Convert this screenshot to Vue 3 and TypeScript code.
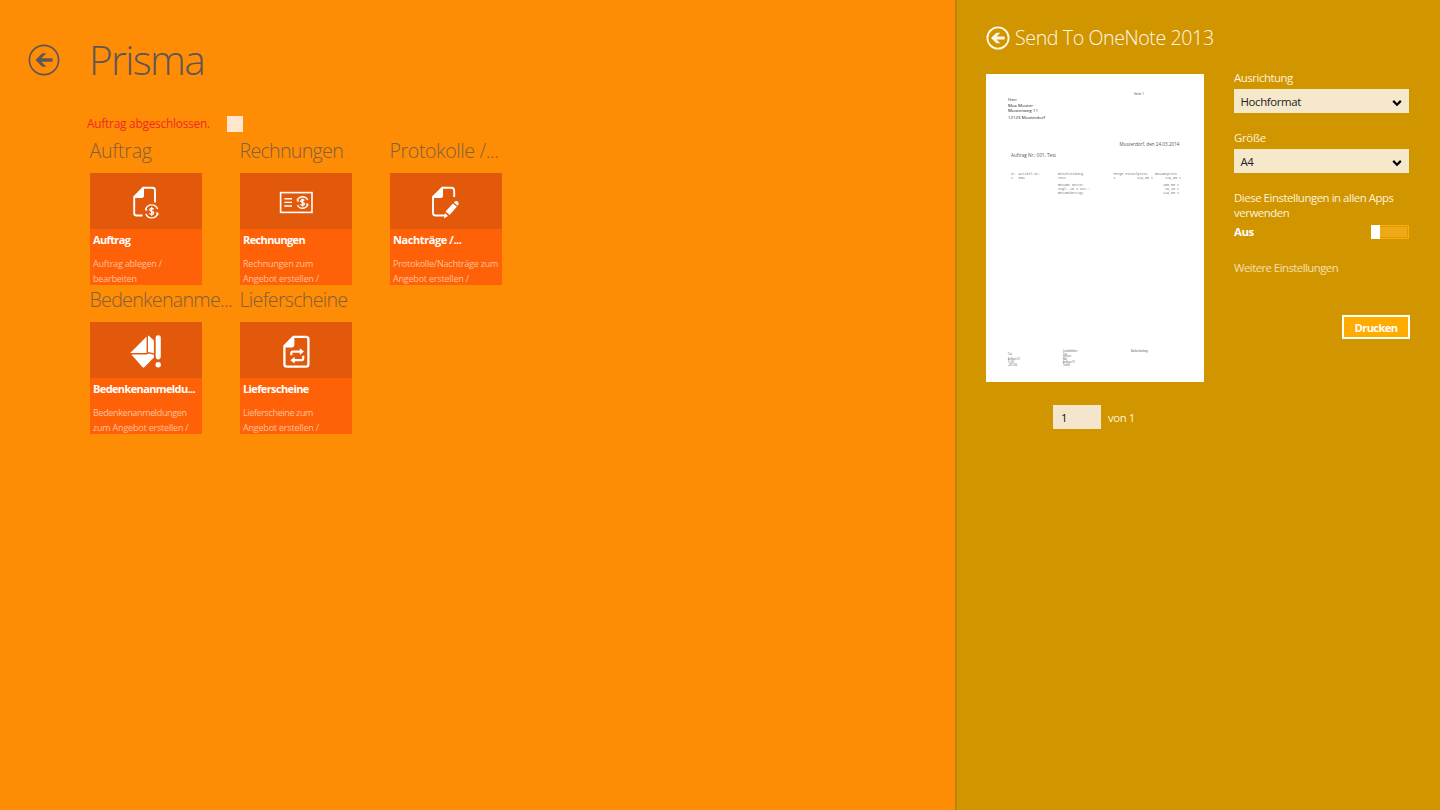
<script setup lang="ts">
import { ref } from "vue";

type IconName = "order" | "invoice" | "protocol" | "concern" | "delivery";

interface Tile {
  icon: IconName;
  group: string;
  title: string;
  lines: string[];
}

interface DocText {
  x: number;
  y: number;
  w: number;
  text: string;
  kind: "sans" | "date" | "mono" | "head" | "foot";
}

const tiles: Tile[] = [
  {
    icon: "order",
    group: "Auftrag",
    title: "Auftrag",
    lines: ["Auftrag ablegen /", "bearbeiten"],
  },
  {
    icon: "invoice",
    group: "Rechnungen",
    title: "Rechnungen",
    lines: ["Rechnungen zum", "Angebot erstellen /"],
  },
  {
    icon: "protocol",
    group: "Protokolle /...",
    title: "Nachträge /...",
    lines: ["Protokolle/Nachträge zum", "Angebot erstellen /"],
  },
  {
    icon: "concern",
    group: "Bedenkenanme...",
    title: "Bedenkenanmeldu...",
    lines: ["Bedenkenanmeldungen", "zum Angebot erstellen /"],
  },
  {
    icon: "delivery",
    group: "Lieferscheine",
    title: "Lieferscheine",
    lines: ["Lieferscheine zum", "Angebot erstellen /"],
  },
];

// printed page, in preview units
const docTexts: DocText[] = [
  { x: 148, y: 21, w: 10, text: "Seite 1", kind: "head" },
  { x: 22, y: 27.4, w: 9, text: "Herr", kind: "sans" },
  { x: 22, y: 32.8, w: 25, text: "Max  Muster", kind: "sans" },
  { x: 22, y: 38.4, w: 30, text: "Musterweg  11", kind: "sans" },
  { x: 22, y: 45.2, w: 37, text: "12123  Musterdorf", kind: "sans" },
  { x: 133.5, y: 71.8, w: 60, text: "Musterdorf, den 24.03.2014", kind: "date" },
  { x: 25, y: 82.8, w: 45, text: "Auftrag Nr.: 001, Test", kind: "date" },
  { x: 25, y: 101, w: 5, text: "Nr.", kind: "mono" },
  { x: 32.5, y: 101, w: 22, text: "Artikel-Nr.", kind: "mono" },
  { x: 72, y: 101, w: 25, text: "Beschreibung", kind: "mono" },
  { x: 127.5, y: 101, w: 34, text: "Menge Einzelpreis", kind: "mono" },
  { x: 169, y: 101, w: 22, text: "Gesamtpreis", kind: "mono" },
  { x: 25, y: 105, w: 2, text: "1", kind: "mono" },
  { x: 32.5, y: 105, w: 6.5, text: "001", kind: "mono" },
  { x: 72, y: 105, w: 8, text: "Test", kind: "mono" },
  { x: 127.5, y: 105, w: 2, text: "1", kind: "mono" },
  { x: 151, y: 105, w: 16, text: "119,60 €", kind: "mono" },
  { x: 179, y: 105, w: 16, text: "119,60 €", kind: "mono" },
  { x: 72, y: 112.4, w: 26, text: "Gesamt Netto:", kind: "mono" },
  { x: 177, y: 112.4, w: 16, text: "100,50 €", kind: "mono" },
  { x: 72, y: 116, w: 32, text: "zzgl. 19 % USt.:", kind: "mono" },
  { x: 179, y: 116, w: 14, text: "19,10 €", kind: "mono" },
  { x: 72, y: 119.6, w: 26, text: "Gesamtbetrag:", kind: "mono" },
  { x: 177, y: 119.6, w: 16, text: "119,60 €", kind: "mono" },
  { x: 22, y: 280.6, w: 4, text: "Test", kind: "foot" },
  { x: 22, y: 286, w: 12, text: "Am Bogen 101", kind: "foot" },
  { x: 22, y: 288.8, w: 6, text: "Tel. Nr.", kind: "foot" },
  { x: 22, y: 291.6, w: 9, text: "+49 1234", kind: "foot" },
  { x: 77, y: 278, w: 15, text: "Geschäftsführer:", kind: "foot" },
  { x: 77, y: 280.6, w: 4, text: "Test", kind: "foot" },
  { x: 77, y: 283.3, w: 8, text: "Internet", kind: "foot" },
  { x: 77, y: 286, w: 4, text: "Mail", kind: "foot" },
  { x: 77, y: 288.8, w: 12, text: "Am Bogen 101", kind: "foot" },
  { x: 77, y: 291.6, w: 7, text: "Telefon", kind: "foot" },
  { x: 145, y: 278, w: 17, text: "Bankverbindung:", kind: "foot" },
];

const done = ref(false);
const page = ref("1");
const orientation = ref("Hochformat");
const size = ref("A4");
</script>

<template>
  <div class="screen">
    <main class="hub">
      <header class="hub-header">
        <svg class="hub-back" viewBox="0 0 32 32" aria-hidden="true">
          <circle cx="16" cy="16" r="14.6" />
          <path d="M7.5 16 14.3 9.2H18.4L13.4 14.3H24.6V17.7H13.4L18.4 22.8H14.3Z" />
        </svg>
        <h1>Prisma</h1>
      </header>

      <div class="status">
        <span class="status-text">Auftrag abgeschlossen.</span>
        <span class="checkbox" @click="done = !done"></span>
      </div>

      <div class="groups">
        <section v-for="tile in tiles" :key="tile.icon" class="group" :class="tile.icon">
          <h2>{{ tile.group }}</h2>
          <div class="tile">
            <div class="tile-top">
              <svg class="tile-icon" viewBox="0 0 36 36" aria-hidden="true">
                <g v-if="tile.icon === 'order'">
                  <path class="line" d="M14.5 31.5H8.5Q6.2 31.5 6.2 29.2V13L15.2 3.7H24.5Q27 3.7 27 6.2V18.5" />
                  <path class="fill" d="M6 14 16 3.4V11.5Q16 14 13.5 14Z" />
                  <path class="thin" d="M17.8 25A6.3 6.3 0 0 1 29.6 25M29.6 29.8A6.3 6.3 0 0 1 17.8 29.8" />
                  <path class="fill" d="M17 23.4V26.4H20ZM30.4 31.4V28.4H27.4Z" />
                  <path class="dollar" d="M25.7 25.2Q25 24.4 23.7 24.4Q21.8 24.4 21.8 25.7Q21.8 26.9 23.7 27.3Q25.7 27.7 25.7 28.9Q25.7 30.3 23.7 30.3Q22.1 30.3 21.4 29.4M23.7 23V31.7" />
                </g>
                <g v-else-if="tile.icon === 'invoice'">
                  <rect class="frame" x="2.6" y="8.6" width="31.4" height="19.8" />
                  <path class="thin" d="M6.4 14.8H14M6.4 18.4H14M6.4 22H14" />
                  <path class="thin" d="M19.4 16A5.7 5.7 0 0 1 29.7 16M29.7 21A5.7 5.7 0 0 1 19.4 21" />
                  <path class="fill" d="M18.8 14.6V17.4H21.6ZM30.3 22.4V19.6H27.5Z" />
                  <path class="dollar" d="M26.4 16.5Q25.7 15.7 24.5 15.7Q22.7 15.7 22.7 17Q22.7 18.1 24.5 18.5Q26.4 18.9 26.4 20Q26.4 21.3 24.5 21.3Q23.1 21.3 22.4 20.4M24.6 14.4V22.6" />
                </g>
                <g v-else-if="tile.icon === 'protocol'">
                  <path class="line" d="M16.5 31.5H7.5Q5 31.5 5 29V13L14.3 3.7H23.2Q26.2 3.7 26.2 6.7V13" />
                  <path class="fill" d="M4.6 14 15 3.4V11.5Q15 14 12.5 14Z" />
                  <path class="fill" d="M24.9 19.4 28.9 22.8 21.6 31 17.6 27.6ZM25.8 18.4 26.8 17.4Q28.4 16.4 30 17.8Q31.4 19.4 30.2 21L29.6 21.8ZM16.8 29.1 20 31.9 16 34.4Z" />
                </g>
                <g v-else-if="tile.icon === 'concern'">
                  <path class="fill" d="M18.6 3.4V20H2.2ZM20 2.6Q20.7 2.5 21.4 3.2L25.9 7.6V20.2L20 19Z" />
                  <path class="fill" d="M3.4 21.6H18.8L20.4 20.6 25.9 21.8V24.4L16.6 34Q15.4 35 14.3 34Z" />
                  <path class="fill" d="M27.7 4.6Q27.7 2.2 30.2 2.2Q32.8 2.2 32.8 4.6V23Q32.8 26.4 30.2 26.4Q27.7 26.4 27.7 23Z" />
                  <circle class="fill" cx="30.2" cy="31.7" r="2.7" />
                </g>
                <g v-else>
                  <path class="line heavy" d="M6.4 13 15.4 3.8H28Q30.4 3.8 30.4 6.2V31.2Q30.4 33.6 28 33.6H8.8Q6.4 33.6 6.4 31.2Z" />
                  <path class="fill" d="M6 14.4 16.4 3.4V12Q16.4 14.4 14 14.4Z" />
                  <path class="thick" d="M13.3 22.2V20Q13.3 18.6 14.7 18.6H22.6M25.2 22.8V25Q25.2 27.2 23.7 27.2H15.8" />
                  <path class="fill" d="M21.8 15.2 26 18.6 21.8 22ZM16.6 23.8 12.4 27.2 16.6 30.6Z" />
                </g>
              </svg>
            </div>
            <div class="tile-body">
              <h3>{{ tile.title }}</h3>
              <p v-for="line in tile.lines" :key="line">{{ line }}</p>
            </div>
          </div>
        </section>
      </div>
    </main>

    <aside class="print">
      <header class="print-header">
        <svg class="print-back" viewBox="0 0 24 24" aria-hidden="true">
          <circle cx="12" cy="12" r="10.6" />
          <path d="M5 12 10.4 6.7H14.2L10.6 10.4H18.6V13.6H10.6L14.2 17.3H10.4Z" />
        </svg>
        <h2>Send To OneNote 2013</h2>
      </header>

      <div class="print-content">
        <div class="preview">
          <svg class="paper" viewBox="0 0 218 308" aria-hidden="true">
            <text
              v-for="(t, i) in docTexts"
              :key="i"
              :x="t.x"
              :y="t.y"
              :textLength="t.w"
              lengthAdjust="spacingAndGlyphs"
              :class="t.kind"
            >{{ t.text }}</text>
          </svg>
          <div class="pager">
            <input v-model="page" class="page-input" />
            <span>von 1</span>
          </div>
        </div>

        <div class="options">
          <label>Ausrichtung</label>
          <div class="select">
            <span>{{ orientation }}</span>
            <svg viewBox="0 0 10 8" aria-hidden="true"><path d="M1.2 1.9 5 5.7 8.8 1.9" /></svg>
          </div>
          <label class="l-size">Größe</label>
          <div class="select">
            <span>{{ size }}</span>
            <svg viewBox="0 0 10 8" aria-hidden="true"><path d="M1.2 1.9 5 5.7 8.8 1.9" /></svg>
          </div>
          <p class="all-apps">Diese Einstellungen in allen Apps<br />verwenden</p>
          <div class="toggle-row">
            <strong>Aus</strong>
            <span class="toggle"><span class="knob"></span></span>
          </div>
          <a class="more">Weitere Einstellungen</a>
          <button class="print-button">Drucken</button>
        </div>
      </div>
    </aside>
  </div>
</template>

<style>
body {
  margin: 0;
  overflow: hidden;
}
</style>

<style scoped>
.screen {
  display: flex;
  width: 1440px;
  height: 810px;
  background: #ff8c05;
  font-family: "Open Sans", "Noto Sans", sans-serif;
  font-size: 11.4px;
  letter-spacing: -0.45px;
}
h1,
h2,
h3,
p {
  margin: 0;
  font-weight: 300;
  white-space: nowrap;
}
.hub {
  width: 955px;
  flex: none;
}
.hub-header {
  display: flex;
  align-items: center;
  height: 60px;
  padding: 30px 0 0 28px;
  color: #5f5658;
}
.hub-back {
  width: 32px;
  height: 32px;
  margin-right: 29px;
}
.hub-back circle {
  fill: none;
  stroke: #5f5658;
  stroke-width: 1.6;
}
.hub-back path {
  fill: #5f5658;
}
.hub-header h1 {
  font-size: 40.5px;
  line-height: 60px;
  letter-spacing: -1.6px;
}
.status {
  display: flex;
  align-items: center;
  height: 16px;
  margin: 26px 0 0 87px;
}
.status-text {
  width: 140px;
  color: #ee2a24;
  font-size: 11.8px;
  letter-spacing: -0.2px;
  line-height: 16px;
  margin-top: -3px;
}
.checkbox {
  width: 16px;
  height: 16px;
  background: #ffe6cf;
}
.groups {
  display: grid;
  grid-template-columns: repeat(3, 150px);
  grid-auto-rows: 149.3px;
  margin: 4px 0 0 90px;
}
.group h2 {
  height: 36.5px;
  margin-left: -0.5px;
  font-size: 19.6px;
  line-height: 29px;
  letter-spacing: -0.7px;
  color: #81603b;
}
.order h2 {
  letter-spacing: -0.25px;
}
.protocol h2 {
  letter-spacing: -0.4px;
}
.tile {
  width: 112.4px;
  height: 112.5px;
  overflow: hidden;
  background: #ff6108;
}
.tile-top {
  display: flex;
  justify-content: center;
  align-items: center;
  height: 56px;
  background: #e3590c;
}
.tile-icon {
  width: 36px;
  height: 36px;
  margin-top: 2px;
}
.line,
.frame,
.thin,
.thick,
.dollar {
  fill: none;
  stroke: #fff;
  stroke-width: 1.9;
}
.heavy {
  stroke-width: 2.3;
}
.frame {
  stroke-width: 1.6;
}
.thin {
  stroke-width: 1.4;
}
.thick {
  stroke-width: 2.2;
}
.dollar {
  stroke-width: 1.3;
}
.fill {
  fill: #fff;
}
.tile-body {
  padding: 2px 0 0 3px;
  color: #ffc09a;
}
.tile-body h3 {
  height: 25px;
  font-size: 11px;
  font-weight: 700;
  line-height: 17px;
  letter-spacing: -0.62px;
  color: #fff;
}
.protocol h3 {
  letter-spacing: -0.42px;
}
.tile-body p {
  font-size: 9px;
  font-weight: 400;
  line-height: 15px;
  letter-spacing: -0.2px;
}
.concern p:nth-child(2),
.delivery p:nth-child(2) {
  letter-spacing: -0.36px;
}
.print {
  flex: 1;
  box-sizing: border-box;
  padding-left: 29px;
  border-left: 2px solid #b9850a;
  background: #d19500;
  color: #fff3da;
}
.print-header {
  display: flex;
  align-items: center;
  height: 74px;
}
.print-back {
  width: 24px;
  height: 24px;
  margin: 1px 5.5px 0 -0.5px;
}
.print-back circle {
  fill: none;
  stroke: #fff8e8;
  stroke-width: 1.8;
}
.print-back path {
  fill: #fff8e8;
}
.print-header h2 {
  margin-top: 2px;
  font-size: 19.6px;
  line-height: 24px;
  letter-spacing: -0.4px;
  color: #fff8e8;
}
.print-content {
  display: flex;
  gap: 30px;
}
.paper {
  display: block;
  width: 218px;
  height: 308px;
  background: #fff;
}
.paper text {
  fill: #444;
  letter-spacing: 0;
}
.paper .head {
  font-size: 3.6px;
}
.paper .sans {
  font: 4.2px "Open Sans", "Noto Sans", sans-serif;
  fill: #222;
}
.paper .date {
  font-size: 5.2px;
  fill: #555;
}
.paper .mono {
  font: 3.4px "Liberation Mono", monospace;
  fill: #777;
}
.paper .foot {
  font-size: 2.6px;
  fill: #444;
}
.pager {
  display: flex;
  align-items: center;
  gap: 7px;
  margin: 23px 0 0 67px;
}
.page-input {
  box-sizing: border-box;
  width: 48px;
  height: 24px;
  padding: 0 8px;
  border: 0;
  outline: none;
  background: #f3e6cc;
  font: inherit;
  color: #111;
}
.options {
  width: 175.4px;
}
.options label {
  display: block;
  height: 15px;
  line-height: 8px;
}
.options .l-size {
  margin-top: 21px;
  letter-spacing: -0.3px;
}
.select {
  display: flex;
  align-items: center;
  justify-content: space-between;
  box-sizing: border-box;
  height: 24px;
  padding: 0 7px 0 6.5px;
  background: #f5e8cb;
  color: #222;
  letter-spacing: -0.35px;
}
.select svg {
  width: 10px;
  height: 8px;
  margin-top: 3px;
}
.select path {
  fill: none;
  stroke: #000;
  stroke-width: 2.2;
}
.all-apps {
  margin-top: 17px;
  font-weight: 400;
  line-height: 15px;
}
.toggle-row {
  display: flex;
  align-items: center;
  justify-content: space-between;
  height: 24px;
}
.toggle-row strong {
  margin-top: -1px;
  color: #fff;
}
.toggle {
  box-sizing: border-box;
  width: 38px;
  height: 14px;
  margin-top: -1px;
  border: 1px solid #ffac05;
  background: #edaa16;
  box-shadow: inset 0 0 0 1px #e09c08;
}
.knob {
  display: block;
  width: 9px;
  height: 14px;
  margin: -1px 0 0 -1px;
  background: #fff;
}
.more {
  display: block;
  margin-top: 16px;
  line-height: 15px;
  letter-spacing: -0.55px;
  color: #f8e0b0;
}
.print-button {
  display: block;
  width: 68px;
  height: 24px;
  margin: 40px 0 0 108px;
  padding: 0;
  border: 2px solid #fff;
  background: #ffab00;
  color: #fff;
  font: 700 11.2px "Open Sans", "Noto Sans", sans-serif;
  letter-spacing: -0.65px;
}
</style>
